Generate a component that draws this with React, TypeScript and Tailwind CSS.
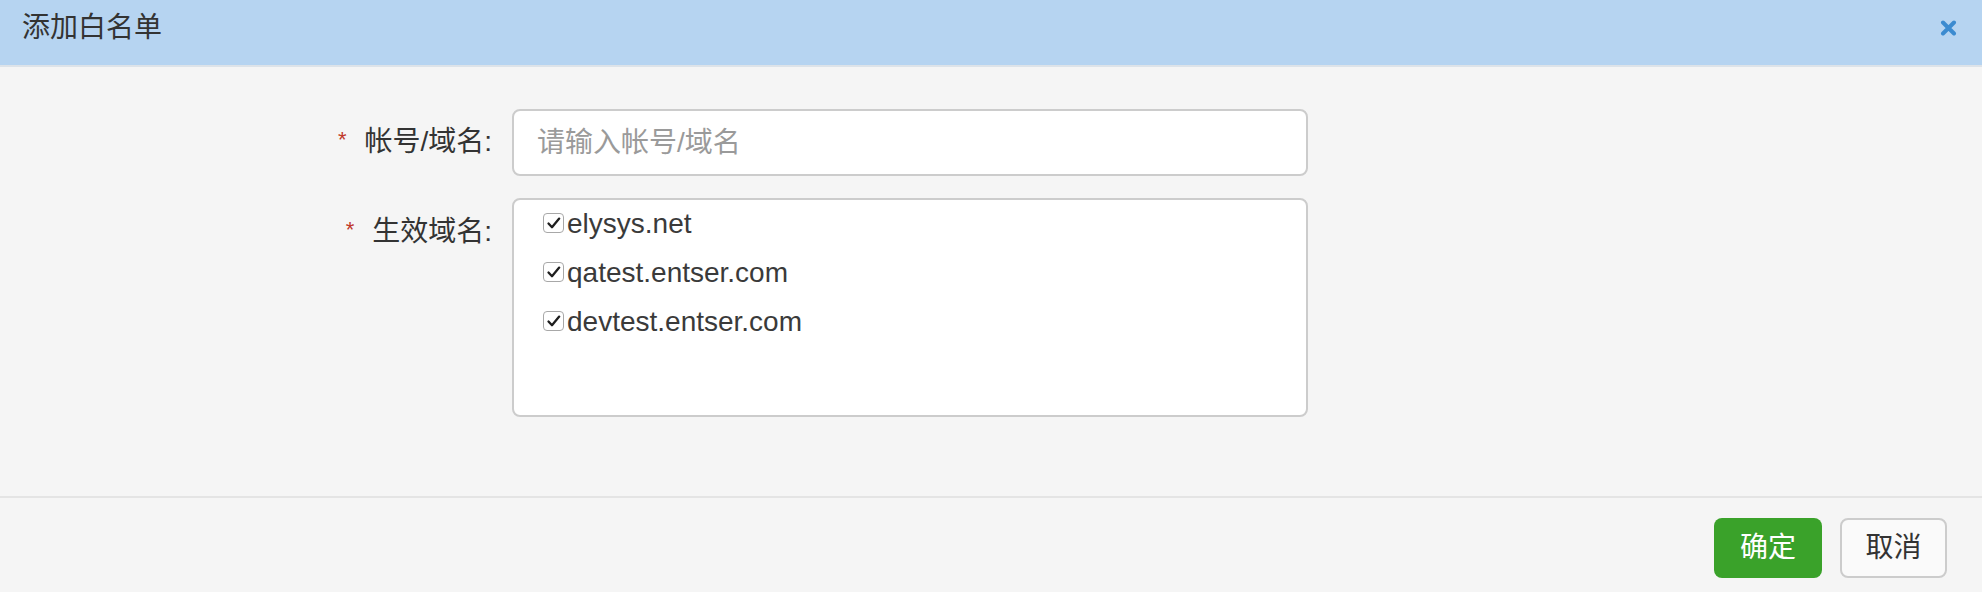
import React from "react";

const FONT = { fontFamily: '"Liberation Sans", "Noto Sans CJK SC", sans-serif' };

function Check() {
  return (
    <span className="inline-flex items-center justify-center w-[21px] h-[20px] border border-[#a8a8a8] rounded-[4px] bg-white shrink-0 mr-[3px] translate-y-[-3px]">
      <svg width="16" height="14" viewBox="0 0 16 14" fill="none">
        <path d="M2.5 7.5 L6 11.2 L13.2 2.6" stroke="#1e1e1e" strokeWidth="2.3" strokeLinecap="round" strokeLinejoin="round" />
      </svg>
    </span>
  );
}

export default function App() {
  const domains = ["elysys.net", "qatest.entser.com", "devtest.entser.com"];
  return (
    <div className="w-[1982px] h-[592px] bg-[#f5f5f5] flex flex-col overflow-hidden text-[#333]" style={FONT}>
      <div className="h-[67px] shrink-0 bg-[#b6d4f1] border-b-2 border-[#dde3e9] flex items-start justify-between pl-[22px] pr-[25px] pt-[8px]">
        <div className="text-[28px] leading-[40px] text-[#333]">添加白名单</div>
        <svg className="mt-[12px]" width="17" height="16" viewBox="0 0 17 16">
          <path d="M3 2.5 L14 13.5 M14 2.5 L3 13.5" stroke="#3c8bd0" strokeWidth="4" strokeLinecap="round" />
        </svg>
      </div>
      <div className="h-[429px] shrink-0 pt-[41px] flex flex-col gap-[21px]">
        <div className="flex items-center">
          <div className="w-[494px] shrink-0 text-right pr-[2px] text-[28px] leading-[67px]">
            <span className="text-[#c0392b] text-[22px] mr-[18px] relative top-[-4px]">*</span>
            帐号/域名:
          </div>
          <div className="ml-[18px] w-[796px] h-[67px] bg-white border-2 border-[#cccccc] rounded-[8px] flex items-center pl-[23px] text-[28px] text-[#9a9a9a]">
            请输入帐号/域名
          </div>
        </div>
        <div className="flex items-start">
          <div className="w-[494px] shrink-0 text-right pr-[2px] text-[28px] leading-[67px]">
            <span className="text-[#c0392b] text-[22px] mr-[18px] relative top-[-4px]">*</span>
            生效域名:
          </div>
          <div className="ml-[18px] w-[796px] h-[219px] bg-white border-2 border-[#cccccc] rounded-[8px] pl-[29px] pt-[1px] flex flex-col">
            {domains.map((d) => (
              <div key={d} className="h-[49px] flex items-center text-[28px] text-[#3a3a3a]">
                <Check />
                <span className="translate-y-[-2px]">{d}</span>
              </div>
            ))}
          </div>
        </div>
      </div>
      <div className="flex-1 border-t-2 border-[#e4e4e4] flex justify-end items-start pt-[20px] pr-[35px] gap-[18px]">
        <button className="w-[108px] h-[60px] rounded-[8px] bg-[#3aa22a] text-white text-[28px] flex items-center justify-center">
          确定
        </button>
        <button className="w-[107px] h-[60px] rounded-[8px] bg-[#fafafa] border-2 border-[#cccccc] text-[#333] text-[28px] flex items-center justify-center">
          取消
        </button>
      </div>
    </div>
  );
}
